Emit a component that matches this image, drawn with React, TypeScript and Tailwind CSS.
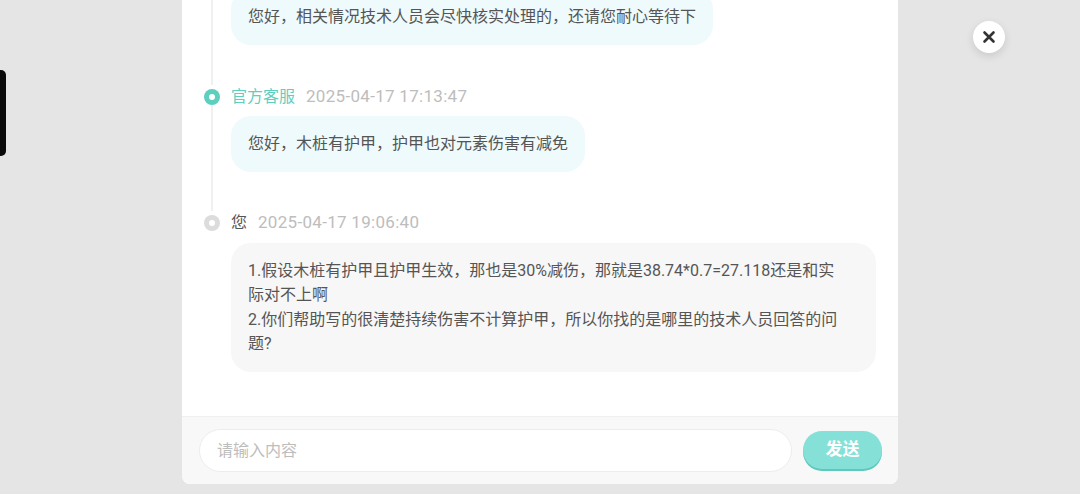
import React from "react";

const FONT = { fontFamily: 'Roboto, "Noto Sans CJK SC", "Noto Sans", sans-serif' };

function Dot({ active }: { active: boolean }) {
  return (
    <div
      className={
        "w-4 h-4 rounded-full flex items-center justify-center shrink-0 mt-1 " +
        (active ? "bg-[#5ccfbf]" : "bg-[#dcdcdc]")
      }
    >
      <div className="w-[6px] h-[6px] rounded-full bg-white" />
    </div>
  );
}

export default function App() {
  return (
    <div className="w-[1080px] h-[494px] bg-[#e5e5e5] flex items-start overflow-hidden" style={FONT}>
      <div className="w-[6px] h-[86px] mt-[70px] bg-[#0a0a0a] rounded-r-[5px] shrink-0" />
      <div className="ml-[176px] w-[716px] h-[484px] bg-white rounded-b-[8px] flex flex-col overflow-hidden shrink-0">
        <div className="flex-1 overflow-hidden pl-[22px] pr-[22px]">
          <div className="-mt-[11px] flex flex-col">
            {/* item 1 */}
            <div className="flex">
              <div className="w-4 flex flex-col items-center">
                <div className="flex-1 w-[2px] bg-[#f0f0f0]" />
              </div>
              <div className="ml-[11px] pb-10">
                <div className="w-fit rounded-[20px] bg-[#eefafb] px-[17px] py-4 text-[16px] leading-6 text-[#555]">
                  您好，相关情况技术人员会尽快核实处理的，还请您耐心等待下
                </div>
              </div>
            </div>
            {/* item 2 */}
            <div className="flex">
              <div className="w-4 flex flex-col items-center">
                <Dot active />
                <div className="flex-1 w-[2px] bg-[#f0f0f0]" />
              </div>
              <div className="ml-[11px] pb-[39px]">
                <div className="h-6 flex items-center gap-[11px] text-[16px]">
                  <span className="text-[#5ccfbf]">官方客服</span>
                  <span className="text-[#bdbdbd] text-[17px] tracking-[0.3px]">2025-04-17 17:13:47</span>
                </div>
                <div className="mt-[7px] w-fit rounded-[20px] bg-[#eefafb] px-[17px] py-4 text-[16px] leading-6 text-[#555]">
                  您好，木桩有护甲，护甲也对元素伤害有减免
                </div>
              </div>
            </div>
            {/* item 3 */}
            <div className="flex">
              <div className="w-4 flex flex-col items-center">
                <Dot active={false} />
              </div>
              <div className="ml-[11px] flex-1">
                <div className="h-6 flex items-center gap-[11px] text-[16px]">
                  <span className="text-[#555]">您</span>
                  <span className="text-[#bdbdbd] text-[17px] tracking-[0.3px]">2025-04-17 19:06:40</span>
                </div>
                <div className="mt-2 w-[645px] rounded-[20px] bg-[#f7f7f7] pl-[17px] pr-[12px] py-4 text-[16px] leading-[24.3px] text-[#555] whitespace-nowrap">
                  <div>1.假设木桩有护甲且护甲生效，那也是30%减伤，那就是38.74*0.7=27.118还是和实</div>
                  <div>际对不上啊</div>
                  <div>2.你们帮助写的很清楚持续伤害不计算护甲，所以你找的是哪里的技术人员回答的问</div>
                  <div>题?</div>
                </div>
              </div>
            </div>
          </div>
        </div>
        <div className="h-[68px] bg-[#f8f8f8] border-t border-[#f0f0f0] flex items-center pl-[17px] pr-[16px] gap-[11px] shrink-0">
          <div className="flex-1 h-[43px] rounded-full bg-white border border-[#ececec] flex items-center pl-[17px] text-[16px] text-[#bdbdbd]">
            请输入内容
          </div>
          <div className="w-[79px] h-[38px] rounded-full bg-[#85e1d8] shadow-[0_2px_0_#5fc8bb] flex items-center justify-center text-white font-bold text-[17px] mb-[1px]">
            发送
          </div>
        </div>
      </div>
      <div className="ml-[75px] mt-[21px] w-8 h-8 rounded-full bg-white shadow-[0_3px_8px_rgba(0,0,0,0.12)] flex items-center justify-center shrink-0">
        <svg width="14" height="14" viewBox="0 0 14 14">
          <path d="M2.5 2.5 L11.5 11.5 M11.5 2.5 L2.5 11.5" stroke="#333" strokeWidth="2.6" strokeLinecap="round" />
        </svg>
      </div>
    </div>
  );
}
